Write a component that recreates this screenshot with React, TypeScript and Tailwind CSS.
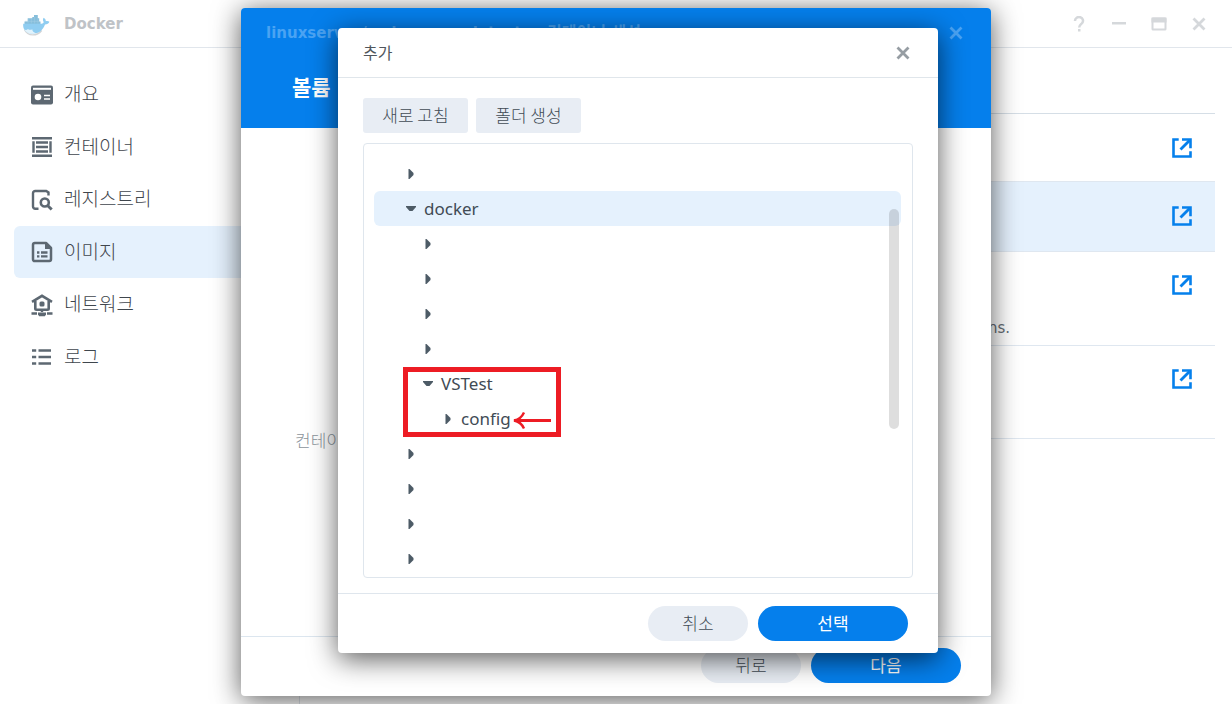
import type { ReactNode } from "react";

function Glyph({ children }: { children: ReactNode }) {
  return (
    <svg viewBox="0 0 24 24" className="mt-px size-6" fill="none" aria-hidden="true">
      {children}
    </svg>
  );
}

function Whale() {
  return (
    <svg viewBox="0 0 28 22" className="mt-0.5 h-[22px] w-7" aria-hidden="true">
      <path d="M2.500 15.500c1.500 3.500 4.500 5.400 8.300 5.400 3.800 0 6.800-1.600 8.900-4.400" stroke="#d3d5d7" strokeWidth="1.400" fill="none" />
      <path d="M2.500 7.500h3.300V4.200h4.500V3h1.700V1h3.800v3.200h1.400v3.300h1.300v3.200h-16z" fill="#86bedb" />
      <path d="M1.200 9.800h18.300c1.200-.2 2-.8 2.200-1.800-1-1.500-.9-3-.1-4.300 1.600.8 2.300 2.200 2.200 3.600 1.300-.4 2.700-.2 3.600.5-.7 1.800-2.200 2.800-4.400 2.800-2 5.700-6.100 9-12 9C4.400 19.600.6 16 1.200 9.800z" fill="#8fcdf1" />
      <path d="M2.300 15.500c1.300.7 2.600.4 3.700-.5 1 1 2.800 1.200 4.300.3 0 1.800 1 3 3 3.700-5 1.300-9 .2-11-3.500z" fill="#e2f3fc" />
      <path d="M6 4.500v5M9.300 4.500v5M12.600 3v6.500M15.900 4.500v5M3 7.300h14" stroke="#a5cfe4" strokeWidth=".5" />
    </svg>
  );
}

function OverviewIcon() {
  return (
    <Glyph>
      <rect x="1" y="2.500" width="22" height="19" rx="2" fill="#5d6872" />
      <path d="M3 5.800h18" stroke="#fff" strokeWidth="2" />
      <circle cx="8" cy="14" r="3.300" fill="#fff" />
      <path d="M14 12.500h6M14 16h6" stroke="#fff" strokeWidth="1.400" />
    </Glyph>
  );
}

function ContainerIcon() {
  return (
    <Glyph>
      <path d="M2 3.300h20M2 20.700h20M6 7.500h12M6 12h12M6 16.500h12" stroke="#5d6872" strokeWidth="2.600" />
      <path d="M3.500 6.300v11.500M20.500 6.300v11.500" stroke="#5d6872" strokeWidth="2.400" />
    </Glyph>
  );
}

function RegistryIcon() {
  return (
    <Glyph>
      <path d="M8.500 20.800H5.200A2.200 2.200 0 0 1 3 18.600V5.200C3 4 4 3 5.200 3h11l2.300 1.500V7.500" stroke="#5d6872" strokeWidth="2.400" />
      <circle cx="14.800" cy="14.500" r="4" stroke="#5d6872" strokeWidth="2.600" />
      <path d="M17.500 17.500l4.200 4" stroke="#5d6872" strokeWidth="3" />
    </Glyph>
  );
}

function ImageIcon() {
  return (
    <Glyph>
      <path d="M3 4.700C3 3.700 3.700 3 4.700 3H16l5 5v11.300c0 1-.7 1.700-1.700 1.700H4.700c-1 0-1.700-.7-1.700-1.700z" stroke="#5d6872" strokeWidth="2.500" strokeLinejoin="round" />
      <path d="M15 2.500V9h6.500z" fill="#5d6872" />
      <path d="M7 12.500h2.400M11 12.500h6.500M7 16.300h2.400M11 16.300h6.500" stroke="#5d6872" strokeWidth="2.300" />
    </Glyph>
  );
}

function NetworkIcon() {
  return (
    <Glyph>
      <path d="M2 8.800l10-6 10 6" stroke="#5d6872" strokeWidth="2.600" />
      <path d="M5.300 8v7.500c0 .8.500 1.200 1.200 1.200h11c.7 0 1.200-.4 1.200-1.200V8" stroke="#5d6872" strokeWidth="2.600" />
      <rect x="9.500" y="8.500" width="5" height="5" rx="1.500" fill="#5d6872" />
      <path d="M12 16v3M1.500 20.500h5.500M17 20.500h5.500" stroke="#5d6872" strokeWidth="2.400" />
      <path d="M8 19.500h8v2l-1.200 1.800H9.200L8 21.500z" fill="#5d6872" />
    </Glyph>
  );
}

function LogIcon() {
  return (
    <Glyph>
      <path d="M2 5.500h4.200M2 12h4.200M2 18.500h4.200M8.500 5.500H21M8.500 12H21M8.500 18.500H21" stroke="#5d6872" strokeWidth="2.700" />
    </Glyph>
  );
}

function LaunchIcon() {
  return (
    <svg viewBox="0 0 20 20" className="size-5" fill="none" aria-hidden="true">
      <path d="M6.700 1.500H1.500v17h17v-5.200M10 1.500h8.500v8.700" stroke="#0580ec" strokeWidth="2.600" />
      <path d="M8.500 11.500L17.500 2.500" stroke="#0580ec" strokeWidth="2.800" />
    </svg>
  );
}

function CloseIcon() {
  return (
    <svg viewBox="0 0 14 14" className="size-3.5" fill="none" aria-hidden="true">
      <path d="M1.500 1.500l11 11M12.500 1.500l-11 11" stroke="currentColor" strokeWidth="2.800" />
    </svg>
  );
}

const nav = [
  { label: "개요", icon: <OverviewIcon /> },
  { label: "컨테이너", icon: <ContainerIcon /> },
  { label: "레지스트리", icon: <RegistryIcon /> },
  { label: "이미지", icon: <ImageIcon />, active: true },
  { label: "네트워크", icon: <NetworkIcon /> },
  { label: "로그", icon: <LogIcon /> },
];

const rows = [
  { box: "h-[68px] pt-6" },
  { box: "h-[70px] bg-[#e5f1fd] pt-6" },
  { box: "h-[94px] pt-[23px]", text: "ns." },
  { box: "h-[93px] pt-[23px]" },
];

type Node = { indent: string; open?: boolean; label?: string; selected?: boolean };

const tree: Node[] = [
  { indent: "pl-8" },
  { indent: "pl-8", open: true, label: "docker", selected: true },
  { indent: "pl-[49px]" },
  { indent: "pl-[49px]" },
  { indent: "pl-[49px]" },
  { indent: "pl-[49px]" },
  { indent: "pl-[49px]", open: true, label: "VSTest" },
  { indent: "pl-[69px]", label: "config" },
  { indent: "pl-8" },
  { indent: "pl-8" },
  { indent: "pl-8" },
  { indent: "pl-8" },
];

function TreeRow({ node }: { node: Node }) {
  return (
    <li className={`flex h-[35px] items-center gap-2 rounded-md ${node.indent} ${node.selected ? "bg-[#e5f1fd]" : ""}`}>
      <button type="button" aria-label={node.open ? "접기" : "펼치기"} aria-expanded={!!node.open} className="flex w-2.5 justify-center">
        <svg viewBox="0 0 10 10" className="size-2.5" aria-hidden="true">
          <path d={node.open ? "M0 2h10v1L6.500 7h-3L0 3z" : "M2.500 0h1L7.500 4v2l-4 4h-1z"} fill="#4d5b66" />
        </svg>
      </button>
      {node.label && (
        <span className="font-['Noto_Sans','Noto_Sans_CJK_KR',sans-serif] text-[17px] leading-6 font-normal text-[#414b55]">{node.label}</span>
      )}
    </li>
  );
}

function PillButton({ children, primary }: { children: ReactNode; primary?: boolean }) {
  return (
    <button
      type="button"
      className={`h-[35px] rounded-full pb-0.5 text-[17px] leading-6 ${primary ? "w-[150px] bg-[#057fec] font-normal text-white" : "w-[100px] bg-[#e8edf4] text-[#414b55]"}`}
    >
      {children}
    </button>
  );
}

function FolderDialog() {
  return (
    <section
      role="dialog"
      aria-label="추가"
      className="absolute top-5 left-[97px] flex w-[600px] flex-col rounded bg-white shadow-[0_6px_28px_rgba(0,0,0,0.65)]"
    >
      <header className="flex h-[50px] items-center justify-between border-b border-[#e0e6eb] px-[25px] text-[#50565d]">
        <h2 className="pb-0.5 text-base leading-6 font-normal">추가</h2>
        <button type="button" aria-label="닫기" className="mr-[3px] text-[#969da3]">
          <CloseIcon />
        </button>
      </header>
      <div className="px-[25px] pt-5 pb-[15px]">
        <div className="flex gap-2 text-[17px] leading-6 text-[#414b55]">
          <button type="button" className="h-[35px] w-[105px] rounded-[3px] bg-[#e8edf4] pb-0.5">새로 고침</button>
          <button type="button" className="h-[35px] w-[105px] rounded-[3px] bg-[#e8edf4] pb-0.5">폴더 생성</button>
        </div>
        <div className="relative mt-2.5 rounded border border-[#dfe6ed] pt-3 pr-[11px] pb-px pl-2.5">
          <ul>
            {tree.map((node, i) => (
              <TreeRow key={i} node={node} />
            ))}
          </ul>
          <div className="absolute top-[65px] right-[13px] h-[220px] w-2.5 rounded-full bg-black/13" />
          <div className="absolute top-[223px] left-[39px] h-[70px] w-[158px] border-[5px] border-[#ed1c24]">
            <svg viewBox="0 0 38 18" className="absolute right-[5px] bottom-[3px] h-[18px] w-[38px]" fill="none" aria-hidden="true">
              <path d="M1 9.500h37" stroke="#ed1c24" strokeWidth="3" />
              <path d="M11 1.500C9 6 5.500 8.700 1 9.500c4.500.8 8 3.500 10 8" stroke="#ed1c24" strokeWidth="2.400" />
            </svg>
          </div>
        </div>
      </div>
      <footer className="flex justify-end gap-2.5 border-t border-[#dfe6ed] px-[30px] py-3">
        <PillButton>취소</PillButton>
        <PillButton primary>선택</PillButton>
      </footer>
    </section>
  );
}

function VolumeDialog() {
  return (
    <div className="absolute inset-0 flex items-center justify-center">
      <section role="dialog" aria-label="볼륨" className="relative flex h-[688px] w-[750px] flex-col rounded bg-white shadow-[0_4px_28px_rgba(0,0,0,0.65)]">
        <header className="h-[120px] rounded-t bg-[#057fec] text-white">
          <div className="flex h-[50px] items-center justify-between pr-7 pl-[25px] text-[#4aa3f3]">
            <h1 className="flex items-center gap-3.5 font-['DejaVu_Sans','Noto_Sans_CJK_KR',sans-serif] text-[15px] leading-6 font-bold whitespace-nowrap">
              <span>linuxserver/code-server:latest -</span>
              <span className="text-base leading-6">컨테이너 생성</span>
            </h1>
            <button type="button" aria-label="닫기">
              <CloseIcon />
            </button>
          </div>
          <h2 className="pt-3 pl-[51px] text-[21px] leading-8 font-bold">볼륨</h2>
        </header>
        <div className="flex-1 pt-[300px] pl-[54px]">
          <p className="text-[17px] leading-6 text-[#8c949b]">컨테이</p>
        </div>
        <footer className="flex justify-end gap-2.5 border-t border-[#dce6ef] px-[30px] pt-[11px] pb-[13px]">
          <PillButton>뒤로</PillButton>
          <PillButton primary>다음</PillButton>
        </footer>
        <FolderDialog />
      </section>
    </div>
  );
}

function WindowButton({ label, children }: { label: string; children: ReactNode }) {
  return (
    <button type="button" aria-label={label} className="flex h-4 w-4 items-center justify-center">
      {children}
    </button>
  );
}

export default function App() {
  return (
    <div className="relative flex h-screen min-h-[704px] flex-col overflow-hidden bg-white font-['Noto_Sans_CJK_KR',sans-serif] font-light">
      <header className="flex h-12 shrink-0 items-center justify-between border-b border-[#e1e6ec] pr-[25px] pl-[22px]">
        <div className="flex items-center gap-3.5">
          <Whale />
          <span className="font-['DejaVu_Sans',sans-serif] text-[15px] leading-6 font-bold text-[#bfc3c7]">Docker</span>
        </div>
        <div className="flex items-center gap-6 text-[#d5d8db]">
          <WindowButton label="도움말">
            <svg viewBox="0 0 14 16" className="h-4 w-3.5" fill="none" aria-hidden="true">
              <path d="M3 5V4.700a4 3.700 0 1 1 7.200 2.300C9 8.500 7.200 9 7.200 11.500" stroke="currentColor" strokeWidth="2.500" />
              <path d="M6 13h2.500v2.500H6z" fill="currentColor" />
            </svg>
          </WindowButton>
          <WindowButton label="최소화">
            <svg viewBox="0 0 14 14" className="size-3.5" aria-hidden="true">
              <path d="M0 5h14v2.500H0z" fill="currentColor" />
            </svg>
          </WindowButton>
          <WindowButton label="최대화">
            <svg viewBox="0 0 16 14" className="h-3.5 w-4" fill="none" aria-hidden="true">
              <rect x="0.500" y="0.500" width="15" height="5" fill="currentColor" />
              <rect x="1.500" y="1.500" width="13" height="11" rx=".5" stroke="currentColor" strokeWidth="2" />
            </svg>
          </WindowButton>
          <WindowButton label="닫기">
            <CloseIcon />
          </WindowButton>
        </div>
      </header>
      <div className="flex flex-1">
        <aside className="w-[300px] shrink-0 border-r border-[#e1e6ec] pt-5 pl-3.5">
          <nav className="grid h-[315px] grid-rows-6">
            {nav.map((item) => (
              <a
                key={item.label}
                href="#"
                className={`flex items-center gap-2.5 rounded-l-md pl-4 text-[19px] leading-6 text-[#3f464d] ${item.active ? "bg-[#e5f1fd]" : ""}`}
              >
                {item.icon}
                <span className="pb-0.5">{item.label}</span>
              </a>
            ))}
          </nav>
        </aside>
        <main className="flex-1 pt-[65px] pr-[17px]">
          <ul className="border-t border-[#d5dee6]">
            {rows.map((row, i) => (
              <li key={i} className={`flex flex-col items-end border-b border-[#dfe7f0] ${row.box}`}>
                <button type="button" aria-label="열기" className="mr-[23px]">
                  <LaunchIcon />
                </button>
                {row.text && (
                  <span className="mt-[21px] mr-[205px] font-['DejaVu_Sans',sans-serif] text-[15px] leading-6 font-normal text-[#666d75]">{row.text}</span>
                )}
              </li>
            ))}
          </ul>
        </main>
      </div>
      <VolumeDialog />
    </div>
  );
}
